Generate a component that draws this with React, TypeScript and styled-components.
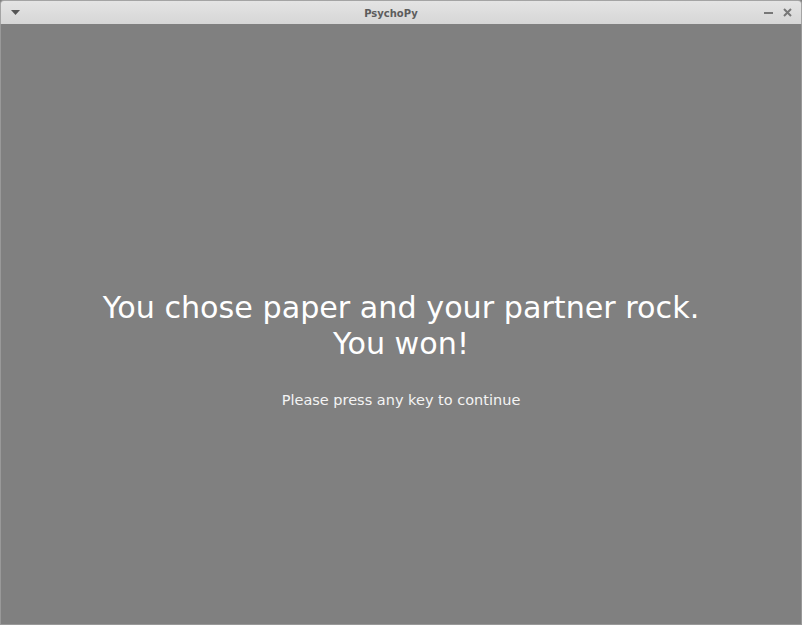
import React from "react";
import styled, { createGlobalStyle } from "styled-components";

const GlobalStyle = createGlobalStyle`
  html, body {
    margin: 0;
    padding: 0;
    background: #808080;
  }
  #root {
    width: 802px;
    height: 625px;
  }
`;

const Window = styled.div`
  width: 802px;
  height: 625px;
  display: flex;
  flex-direction: column;
  overflow: hidden;
`;

const TitleBar = styled.div`
  height: 24px;
  flex-shrink: 0;
  display: grid;
  grid-template-columns: 40px 1fr 60px;
  align-items: center;
  box-sizing: border-box;
  border: 1px solid #a4a4a4;
  border-bottom: none;
  border-radius: 4px 4px 0 0;
  background: linear-gradient(#e4e4e4, #d6d6d6);
`;

const Title = styled.div`
  text-align: center;
  font-family: "DejaVu Sans", "Liberation Sans", sans-serif;
  font-weight: bold;
  font-size: 10px;
  color: #5c5c5c;
  padding-top: 1px;
`;

const MenuButton = styled.div`
  padding-left: 10px;
  display: flex;
  align-items: center;
`;

const Controls = styled.div`
  display: flex;
  justify-content: flex-end;
  align-items: center;
  gap: 10px;
  padding-right: 9px;
`;

const Screen = styled.div`
  flex: 1;
  display: flex;
  flex-direction: column;
  align-items: center;
  box-sizing: border-box;
  padding-top: 266px;
  background: #808080;
  border: 1px solid #999;
  border-top: none;
  font-family: "DejaVu Sans", "Liberation Sans", sans-serif;
  color: #ffffff;
`;

const Message = styled.div`
  font-size: 30.2px;
  line-height: 36px;
  text-align: center;
`;

const Prompt = styled.div`
  margin-top: 30px;
  font-size: 14.5px;
  line-height: 17px;
  color: #f4f4f4;
`;

const App = () => {
  return (
    <>
      <GlobalStyle />
      <Window>
        <TitleBar>
          <MenuButton>
            <svg width="9" height="5" viewBox="0 0 9 5">
              <path d="M0 0 L9 0 L4.5 5 Z" fill="#555" />
            </svg>
          </MenuButton>
          <Title>PsychoPy</Title>
          <Controls>
            <svg width="9" height="9" viewBox="0 0 9 9">
              <rect x="0" y="4" width="9" height="2" fill="#777" />
            </svg>
            <svg width="9" height="9" viewBox="0 0 9 9">
              <path d="M1 1 L8 8 M8 1 L1 8" stroke="#777" strokeWidth="2" />
            </svg>
          </Controls>
        </TitleBar>
        <Screen>
          <Message>
            You chose paper and your partner rock.
            <br />
            You won!
          </Message>
          <Prompt>Please press any key to continue</Prompt>
        </Screen>
      </Window>
    </>
  );
};

export default App;
